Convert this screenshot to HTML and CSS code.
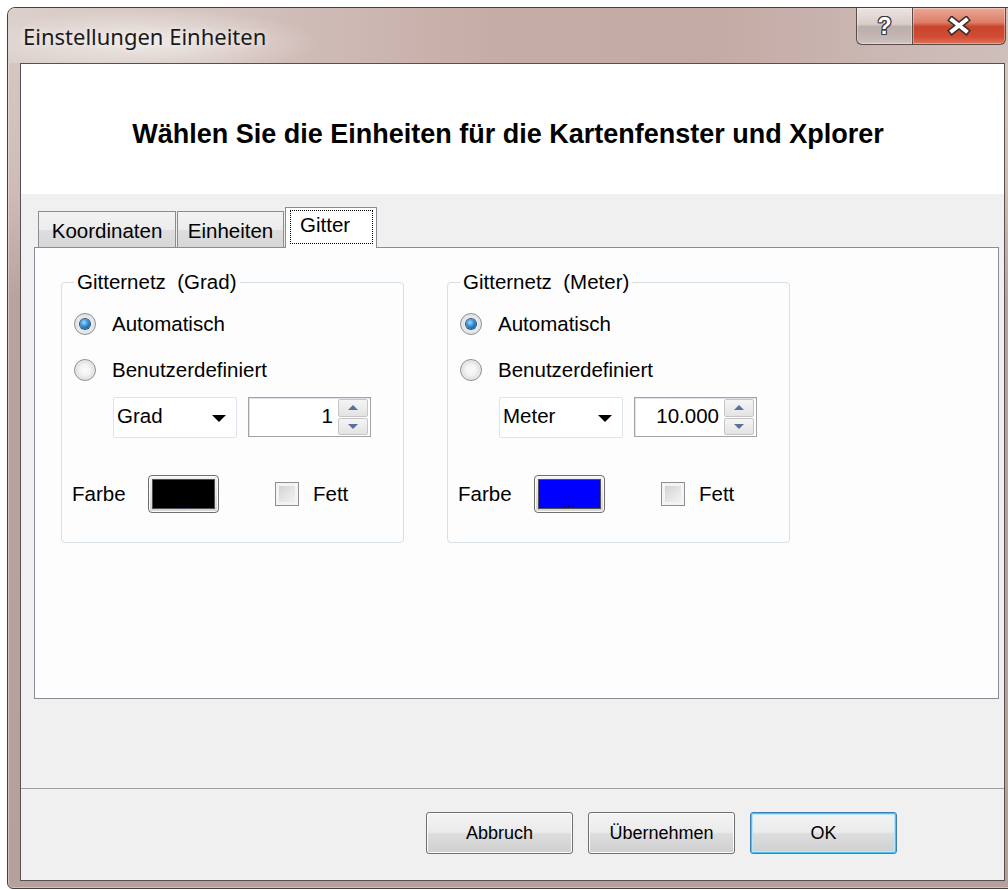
FILE: index.html
```html
<!DOCTYPE html>
<html lang="de">
<head>
<meta charset="utf-8">
<title>Einstellungen Einheiten</title>
<link rel="stylesheet" href="styles.css">
</head>
<body>
<div class="window">
  <div class="titlebar">
    <div class="title">Einstellungen Einheiten</div>
    <div class="caption-buttons">
      <div class="cap-btn help"><span class="help-glyph">?</span></div>
      <div class="cap-btn close">
        <svg width="26" height="20" viewBox="0 0 26 20">
          <path d="M6 4 L20 15 M20 4 L6 15" stroke="#3a2d2b" stroke-width="7" stroke-linecap="square" fill="none"/>
          <path d="M6 4 L20 15 M20 4 L6 15" stroke="#ffffff" stroke-width="4" stroke-linecap="square" fill="none"/>
        </svg>
      </div>
    </div>
  </div>

  <div class="client">
    <div class="header">
      <h1 class="heading">Wählen Sie die Einheiten für die Kartenfenster und Xplorer</h1>
    </div>

    <div class="body">
      <div class="tabs">
        <div class="tab tab-koord">Koordinaten</div>
        <div class="tab tab-einh">Einheiten</div>
        <div class="tab tab-active"><span class="focus-rect">Gitter</span></div>
      </div>

      <div class="panel">
        <fieldset class="group">
          <legend>Gitternetz&nbsp; (Grad)</legend>
          <div class="group-inner">
            <div class="radio-row"><span class="radio checked"></span><span>Automatisch</span></div>
            <div class="radio-row"><span class="radio"></span><span>Benutzerdefiniert</span></div>
            <div class="input-row">
              <div class="combo"><span class="combo-text">Grad</span><span class="combo-arrow"></span></div>
              <div class="spinner">
                <span class="spin-value">1</span>
                <span class="spin-buttons">
                  <span class="spin-btn"><span class="arrow-up"></span></span>
                  <span class="spin-btn"><span class="arrow-down"></span></span>
                </span>
              </div>
            </div>
            <div class="color-row">
              <span class="color-label">Farbe</span>
              <span class="swatch"><span class="swatch-fill black"><span class="dots">...</span></span></span>
              <span class="checkbox"></span>
              <span class="check-label">Fett</span>
            </div>
          </div>
        </fieldset>

        <fieldset class="group">
          <legend>Gitternetz&nbsp; (Meter)</legend>
          <div class="group-inner">
            <div class="radio-row"><span class="radio checked"></span><span>Automatisch</span></div>
            <div class="radio-row"><span class="radio"></span><span>Benutzerdefiniert</span></div>
            <div class="input-row">
              <div class="combo"><span class="combo-text">Meter</span><span class="combo-arrow"></span></div>
              <div class="spinner">
                <span class="spin-value">10.000</span>
                <span class="spin-buttons">
                  <span class="spin-btn"><span class="arrow-up"></span></span>
                  <span class="spin-btn"><span class="arrow-down"></span></span>
                </span>
              </div>
            </div>
            <div class="color-row">
              <span class="color-label">Farbe</span>
              <span class="swatch"><span class="swatch-fill blue"><span class="dots">...</span></span></span>
              <span class="checkbox"></span>
              <span class="check-label">Fett</span>
            </div>
          </div>
        </fieldset>
      </div>

      <div class="spacer"></div>
      <div class="separator"></div>

      <div class="footer">
        <button class="btn">Abbruch</button>
        <button class="btn">Übernehmen</button>
        <button class="btn btn-default">OK</button>
      </div>
    </div>
  </div>
</div>
</body>
</html>
```

FILE: styles.css
```css
html, body {
  margin: 0;
  padding: 0;
  overflow: hidden;
  background: #ffffff;
}

body {
  width: 1008px;
  height: 890px;
  font-family: "Liberation Sans", Arial, sans-serif;
  font-size: 20.5px;
  color: #000;
}

/* ---------- window frame ---------- */
.window {
  margin: 7px 0 0 7px;
  width: 1011px;
  height: 882px;
  box-sizing: border-box;
  border: 1px solid #4a3f3d;
  border-radius: 8px 8px 6px 6px;
  padding: 0 12px 7px 12px;
  display: flex;
  flex-direction: column;
  background: linear-gradient(180deg, #d8cac6 0, #cfbcb8 180px, #b9a39e 290px, #b6a09b 100%);
  box-shadow: inset 0 0 0 1px rgba(255, 255, 255, 0.35);
}

.titlebar {
  height: 55px;
  margin: 0 -12px;
  padding: 0 11px 0 15px;
  display: flex;
  justify-content: space-between;
  align-items: flex-start;
  border-radius: 7px 7px 0 0;
  background:
    radial-gradient(ellipse 170px 34px at 140px 34px, rgba(255, 255, 255, 0.6), rgba(255, 255, 255, 0)),
    linear-gradient(90deg, #dcd0cc 0%, #d3c2bd 22%, #c6aca6 48%, #c4aaa4 70%, #cbb8b4 88%, #cfc0bc 100%);
}

.title {
  font-family: "Noto Sans", "Open Sans", sans-serif;
  font-size: 22px;
  line-height: 28px;
  padding-top: 14px;
  color: #1a1a1a;
  text-shadow: 0 0 6px rgba(255, 255, 255, 0.8);
}

.caption-buttons {
  display: flex;
  height: 37px;
}

.cap-btn {
  height: 37px;
  box-sizing: border-box;
  border: 1px solid #5a4b48;
  border-top: none;
  display: flex;
  align-items: center;
  justify-content: center;
  box-shadow: inset 0 0 0 1px rgba(255, 255, 255, 0.35);
}

.help {
  width: 56px;
  border-right: none;
  border-bottom-left-radius: 6px;
  background: linear-gradient(180deg, #ece4e2 0%, #d9ccc9 45%, #bcaeaa 52%, #c3b6b3 80%, #cfc4c1 100%);
}

.help-glyph {
  font-family: "Liberation Sans", Arial, sans-serif;
  font-weight: bold;
  font-size: 23px;
  line-height: 23px;
  color: #ffffff;
  text-shadow: -1px 0 #3d3533, 1px 0 #3d3533, 0 -1px #3d3533, 0 1px #3d3533,
    -1px -1px #3d3533, 1px 1px #3d3533, -1px 1px #3d3533, 1px -1px #3d3533;
}

.close {
  width: 94px;
  border-bottom-right-radius: 6px;
  background: linear-gradient(180deg, #eba796 0%, #dd7f68 40%, #c9432a 52%, #cf4d33 80%, #df7258 100%);
}

/* ---------- client area ---------- */
.client {
  flex: 1;
  display: flex;
  flex-direction: column;
  border: 1px solid #575050;
  background: #f0f0f0;
}

.header {
  height: 130px;
  box-sizing: border-box;
  padding-top: 54px;
  background: #ffffff;
}

.heading {
  margin: 0;
  text-align: center;
  font-family: "Liberation Sans", Arial, sans-serif;
  font-weight: bold;
  font-size: 27px;
  line-height: 32px;
  padding-right: 9px;
  color: #000;
}

.body {
  flex: 1;
  display: flex;
  flex-direction: column;
}

/* ---------- tabs ---------- */
.tabs {
  display: flex;
  align-items: flex-end;
  height: 40px;
  margin-top: 13px;
  padding-left: 17px;
}

.tab {
  height: 36px;
  box-sizing: border-box;
  border: 1px solid #898c95;
  border-bottom: none;
  padding-top: 5px;
  line-height: 28px;
  text-align: center;
  background: linear-gradient(180deg, #f3f3f3 0%, #ececec 50%, #dedede 52%, #d7d7d7 100%);
}

.tab-koord {
  width: 138px;
}

.tab-einh {
  width: 107px;
  margin-left: 1px;
}

.tab-active {
  position: relative;
  z-index: 1;
  width: 92px;
  height: 41px;
  margin-left: 1px;
  margin-bottom: -1px;
  padding-top: 2px;
  text-align: left;
  background: #ffffff;
}

.focus-rect {
  display: block;
  box-sizing: border-box;
  height: 34px;
  margin: 0 3px 0 4px;
  padding-left: 9px;
  line-height: 28px;
  border: 1px dotted #000;
}

/* ---------- tab page ---------- */
.panel {
  height: 452px;
  box-sizing: border-box;
  margin: 0 5px 0 13px;
  border: 1px solid #898c95;
  background: #fdfdfd;
  padding: 22px 0 0 26px;
  display: flex;
  align-items: flex-start;
  gap: 43px;
}

.group {
  width: 343px;
  box-sizing: border-box;
  margin: 0;
  padding: 0;
  border: 1px solid #d5dfe5;
  border-radius: 4px;
  min-width: 0;
}

.group legend {
  margin-left: 12px;
  padding: 0 3px;
  line-height: 24px;
}

.group-inner {
  padding: 7px 0 29px 0;
}

.radio-row {
  height: 46px;
  display: flex;
  align-items: center;
  padding-left: 12px;
  line-height: 28px;
}

.radio {
  width: 22px;
  height: 22px;
  margin-right: 16px;
  box-sizing: border-box;
  border-radius: 50%;
  border: 1px solid #8e9090;
  position: relative;
  background: radial-gradient(circle at 50% 50%, #fbfbfb 0%, #f2f2f2 40%, #d9d9d9 70%, #cfcfcf 100%);
  box-shadow: inset 0 0 0 1px #ececec;
}

.radio.checked::after {
  content: "";
  position: absolute;
  left: 50%;
  top: 50%;
  width: 10px;
  height: 10px;
  margin: -5px 0 0 -5px;
  border-radius: 50%;
  background: radial-gradient(circle at 40% 35%, #9fdcff 0%, #3a96dd 40%, #155d9f 75%, #0d3f72 100%);
  box-shadow: 0 0 0 1px #2b4e72;
}

.input-row {
  display: flex;
  gap: 11px;
  margin-top: 4px;
  padding-left: 51px;
  height: 41px;
}

.combo {
  width: 124px;
  height: 41px;
  box-sizing: border-box;
  border: 1px solid #dde4eb;
  border-radius: 2px;
  background: #ffffff;
  display: flex;
  align-items: center;
  justify-content: space-between;
  padding: 0 10px 3px 3px;
}

.combo-text {
  line-height: 28px;
}

.combo-arrow {
  width: 0;
  height: 0;
  border-left: 7px solid transparent;
  border-right: 7px solid transparent;
  border-top: 7px solid #000;
  margin-top: 4px;
}

.spinner {
  width: 123px;
  height: 40px;
  box-sizing: border-box;
  border: 1px solid #a3a3a3;
  box-shadow: inset 1px 1px 0 #e2e3ea;
  background: #ffffff;
  display: flex;
  align-items: center;
  justify-content: flex-end;
  padding: 1px 2px 1px 0;
}

.spin-value {
  line-height: 28px;
  padding-bottom: 3px;
  margin-right: 5px;
}

.spin-buttons {
  width: 30px;
  height: 36px;
  display: flex;
  flex-direction: column;
  gap: 1px;
}

.spin-btn {
  flex: 1;
  box-sizing: border-box;
  border: 1px solid #c5c5c5;
  border-radius: 2px;
  background: linear-gradient(180deg, #f5f5f5, #e3e3e3);
  display: flex;
  align-items: center;
  justify-content: center;
}

.arrow-up {
  width: 0;
  height: 0;
  border-left: 5px solid transparent;
  border-right: 5px solid transparent;
  border-bottom: 5px solid #5b6f9c;
}

.arrow-down {
  width: 0;
  height: 0;
  border-left: 5px solid transparent;
  border-right: 5px solid transparent;
  border-top: 5px solid #5b6f9c;
}

.color-row {
  display: flex;
  align-items: center;
  height: 38px;
  margin-top: 37px;
  padding-left: 10px;
  line-height: 28px;
}

.color-label {
  width: 76px;
}

.swatch {
  width: 71px;
  height: 38px;
  box-sizing: border-box;
  border: 1px solid #6e6e6e;
  border-radius: 4px;
  padding: 3px;
  background: linear-gradient(180deg, #f2f2f2, #d5d5d5);
  box-shadow: inset 0 0 0 1px #fbfbfb;
  display: flex;
}

.swatch-fill {
  flex: 1;
  border: 1px solid #505050;
  display: flex;
  align-items: flex-end;
  justify-content: center;
  overflow: hidden;
}

.swatch-fill.black {
  background: #000000;
}

.swatch-fill.blue {
  background: #0000ff;
}

.dots {
  font-family: "Liberation Sans", Arial, sans-serif;
  font-size: 12px;
  line-height: 10px;
  letter-spacing: 1px;
  color: #0a0a50;
}

.checkbox {
  width: 24px;
  height: 24px;
  box-sizing: border-box;
  margin-left: 56px;
  margin-right: 14px;
  border: 1px solid #8f8f8f;
  background: linear-gradient(135deg, #cbcbcb 0%, #e6e6e6 55%, #f6f6f6 100%);
  box-shadow: inset 0 0 0 3px #f4f4f4;
}

/* ---------- bottom buttons ---------- */
.spacer {
  height: 89px;
}

.separator {
  height: 1px;
  background: #a0a0a0;
}

.footer {
  flex: 1;
  display: flex;
  justify-content: flex-end;
  align-items: flex-start;
  gap: 15px;
  padding: 23px 107px 0 0;
}

.btn {
  width: 147px;
  height: 42px;
  box-sizing: border-box;
  margin: 0;
  padding: 0;
  border: 1px solid #707070;
  border-radius: 3px;
  font-family: "Liberation Sans", Arial, sans-serif;
  font-size: 18px;
  line-height: 28px;
  color: #000;
  background: linear-gradient(180deg, #f3f3f3 0%, #ebebeb 48%, #dddddd 52%, #cfcfcf 100%);
  box-shadow: inset 0 0 0 1px #fbfbfb;
}

.btn-default {
  border-color: #3c7fb1;
  box-shadow: inset 0 0 0 1px #48c5f2, inset 0 0 0 2px #b6e6f8;
}
```
